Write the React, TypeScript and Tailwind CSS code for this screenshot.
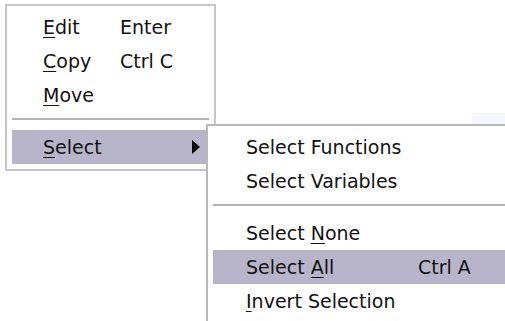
import React from 'react';

type Item =
  | { kind: 'item'; pre?: string; key?: string; post?: string; shortcut?: string; active?: boolean; sub?: boolean }
  | { kind: 'sep' };

const mainItems: Item[] = [
  { kind: 'item', key: 'E', post: 'dit', shortcut: 'Enter' },
  { kind: 'item', key: 'C', post: 'opy', shortcut: 'Ctrl C' },
  { kind: 'item', key: 'M', post: 'ove' },
  { kind: 'sep' },
  { kind: 'item', key: 'S', post: 'elect', active: true, sub: true },
];

const subItems: Item[] = [
  { kind: 'item', pre: 'Select Functions' },
  { kind: 'item', pre: 'Select Variables' },
  { kind: 'sep' },
  { kind: 'item', pre: 'Select ', key: 'N', post: 'one' },
  { kind: 'item', pre: 'Select ', key: 'A', post: 'll', shortcut: 'Ctrl A', active: true },
  { kind: 'item', key: 'I', post: 'nvert Selection' },
];

const MenuRows: React.FC<{ items: Item[]; indent: string; labelW: string }> = ({ items, indent, labelW }) => (
  <>
    {items.map((it, i) =>
      it.kind === 'sep' ? (
        <div key={i} className="h-[18px] pt-[6px]">
          <div className="h-[2px] bg-[#b4b4b4]" />
        </div>
      ) : (
        <div
          key={i}
          className={`h-[34px] flex items-center ${indent} pr-[9px] ${it.active ? 'bg-[#b8b5ca]' : ''}`}
        >
          <span className={`${labelW} shrink-0 whitespace-nowrap`}>
            {it.pre}
            {it.key && <span className="underline underline-offset-[3px]">{it.key}</span>}
            {it.post}
          </span>
          {it.shortcut && <span className="whitespace-nowrap">{it.shortcut}</span>}
          {it.sub && (
            <span className="ml-auto w-0 h-0 border-y-[7px] border-y-transparent border-l-[8px] border-l-black" />
          )}
        </div>
      )
    )}
  </>
);

export default function App() {
  return (
    <div className="relative w-[505px] h-[321px] bg-white overflow-hidden text-[19px] leading-none text-[#111] font-['DejaVu_Sans',sans-serif]">
      <div className="absolute left-[472px] top-[113px] w-[33px] h-[11px] bg-[#f5f5fd]" />

      {/* main menu */}
      <div className="ml-[5px] mt-[4px] w-[211px] border-2 border-[#c6c6c6] bg-white px-[5px] pt-[4px] pb-[5px]">
        <MenuRows items={mainItems} indent="pl-[31px]" labelW="w-[77px]" />
      </div>

      {/* submenu */}
      <div className="absolute left-[206px] top-[124px] w-[330px] border-2 border-[#b8b8b8] bg-white px-[5px] pt-[4px] pb-[5px]">
        <MenuRows items={subItems} indent="pl-[33px]" labelW="w-[172px]" />
      </div>
    </div>
  );
}
